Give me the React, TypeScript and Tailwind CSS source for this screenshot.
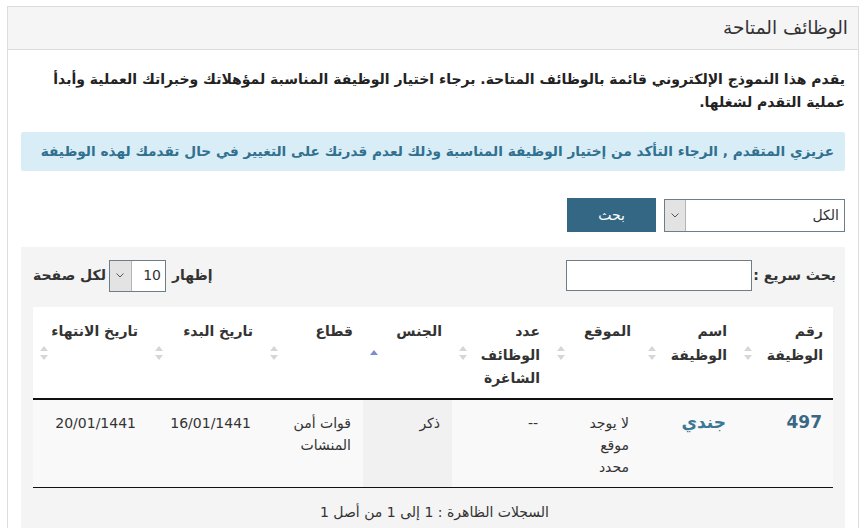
import React from 'react'

const SortBoth = () => (
  <svg width="8" height="14" viewBox="0 0 8 14" className="block">
    <path d="M4 0 L8 5 L0 5 Z" fill="#d6d6d6" />
    <path d="M4 14 L8 9 L0 9 Z" fill="#d6d6d6" />
  </svg>
)

const SortAsc = () => (
  <svg width="8" height="14" viewBox="0 0 8 14" className="block">
    <path d="M4 4 L8 9 L0 9 Z" fill="#7b8ed0" />
  </svg>
)

const Chevron = () => (
  <svg width="8" height="5" viewBox="0 0 8 5">
    <polyline points="0.5,0.5 4,4 7.5,0.5" fill="none" stroke="#555" strokeWidth="1" />
  </svg>
)

type Col = {
  title: React.ReactNode
  width: string
  sort: 'both' | 'asc'
}

const columns: Col[] = [
  { title: <>رقم<br />الوظيفة</>, width: 'w-[96px]', sort: 'both' },
  { title: <>اسم<br />الوظيفة</>, width: 'w-[96px]', sort: 'both' },
  { title: 'الموقع', width: 'w-[91px]', sort: 'both' },
  { title: <>عدد<br />الوظائف<br />الشاغرة</>, width: 'w-[98px]', sort: 'both' },
  { title: 'الجنس', width: 'w-[89px]', sort: 'asc' },
  { title: 'قطاع', width: 'w-[100px]', sort: 'both' },
  { title: 'تاريخ البدء', width: 'w-[115px]', sort: 'both' },
  { title: 'تاريخ الانتهاء', width: 'w-[115px]', sort: 'both' }
]

const App: React.FC = () => {
  return (
    <div
      dir="rtl"
      className="min-h-screen bg-white pt-[6px] pl-[7px] pr-[8px] font-['DejaVu_Sans',sans-serif] text-[#333]"
    >
      <div className="border border-[#dcdcdc] border-b-0 min-h-[522px]">
        {/* panel heading */}
        <div className="h-[43px] bg-[#f5f5f5] border-b border-[#dcdcdc] px-[10px] flex items-center text-[18.5px] text-[#333]">
          الوظائف المتاحة
        </div>

        <div className="px-[13px] pt-[18px]">
          <p className="font-bold text-[14px] leading-[23px] text-[#222]">
            يقدم هذا النموذج الإلكتروني قائمة بالوظائف المتاحة. برجاء اختيار
            الوظيفة المناسبة لمؤهلاتك وخبراتك العملية وأبدأ عملية التقدم
            لشغلها.
          </p>

          <div className="mt-[18px] h-[39px] bg-[#d9edf7] text-[#31708f] font-bold text-[13.7px] whitespace-nowrap flex items-center px-[11px] rounded-[2px]">
            عزيزي المتقدم , الرجاء التأكد من إختيار الوظيفة المناسبة وذلك لعدم
            قدرتك على التغيير في حال تقدمك لهذه الوظيفة
          </div>

          <div className="mt-[27px] flex items-center gap-[8px]">
            <div className="w-[181px] h-[33px] border border-[#6e7e89] bg-white flex items-stretch">
              <span className="flex-1 flex items-center px-[5px] text-[14px]">
                الكل
              </span>
              <span className="w-[21px] bg-[#e3e3e3] border-r border-[#b5b5b5] flex items-center justify-center">
                <Chevron />
              </span>
            </div>
            <button className="w-[89px] h-[34px] bg-[#346783] text-white text-[14px]">
              بحث
            </button>
          </div>

          <div className="mt-[15px] bg-[#f4f4f4] pl-[12px] pr-[9px] pt-[12px] pb-[20px]">
            <div className="flex items-center justify-between h-[33px]">
              <div className="flex items-center gap-[1px]">
                <span className="font-bold text-[14px] whitespace-nowrap">بحث سريع :</span>
                <input className="w-[186px] h-[31px] border border-[#6e7e89] bg-white" />
              </div>
              <div className="flex items-center text-[14px] font-bold">
                <span className="ml-[6px]">إظهار</span>
                <div className="w-[57px] h-[32px] border border-[#6e7e89] bg-white flex items-stretch font-normal">
                  <span className="flex-1 flex items-center px-[4px]">10</span>
                  <span className="w-[22px] bg-[#e3e3e3] border-r border-[#b5b5b5] flex items-center justify-center">
                    <Chevron />
                  </span>
                </div>
                <span className="mr-[3px]">لكل صفحة</span>
              </div>
            </div>

            <table className="mt-[15px] mr-[3px] w-[800px] table-fixed border-collapse bg-white text-[14px]">
              <thead>
                <tr className="border-b-2 border-[#111]">
                  {columns.map((c, i) => (
                    <th
                      key={i}
                      className={`${c.width} relative h-[92px] align-top text-right font-bold leading-[23.5px] pt-[13px] pr-[10px] pl-[24px] whitespace-nowrap`}
                    >
                      {c.title}
                      <span className="absolute left-[7px] top-[39px]">
                        {c.sort === 'asc' ? <SortAsc /> : <SortBoth />}
                      </span>
                    </th>
                  ))}
                </tr>
              </thead>
              <tbody>
                <tr className="border-b border-[#111] bg-[#f9f9f9] align-top leading-[22px]">
                  <td className="h-[88px] pt-[11px] pr-[11px] text-[17px] font-bold text-[#3a6883]">
                    497
                  </td>
                  <td className="pt-[11px] pr-[11px] text-[17px] font-semibold text-[#3b7894]">
                    جندي
                  </td>
                  <td className="pt-[12px] pr-[12px]">
                    لا يوجد
                    <br />
                    موقع
                    <br />
                    محدد
                  </td>
                  <td className="pt-[12px] pr-[12px]">--</td>
                  <td className="pt-[12px] pr-[12px] bg-[#f1f1f1]">ذكر</td>
                  <td className="pt-[12px] pr-[12px]">
                    قوات أمن
                    <br />
                    المنشات
                  </td>
                  <td className="pt-[12px] pr-[12px]">16/01/1441</td>
                  <td className="pt-[12px] pr-[12px]">20/01/1441</td>
                </tr>
              </tbody>
            </table>

            <div className="mt-[13px] text-center text-[14px] leading-[22px]">
              السجلات الظاهرة : 1 إلى 1 من أصل 1
            </div>
          </div>
        </div>
      </div>
    </div>
  )
}

export default App
